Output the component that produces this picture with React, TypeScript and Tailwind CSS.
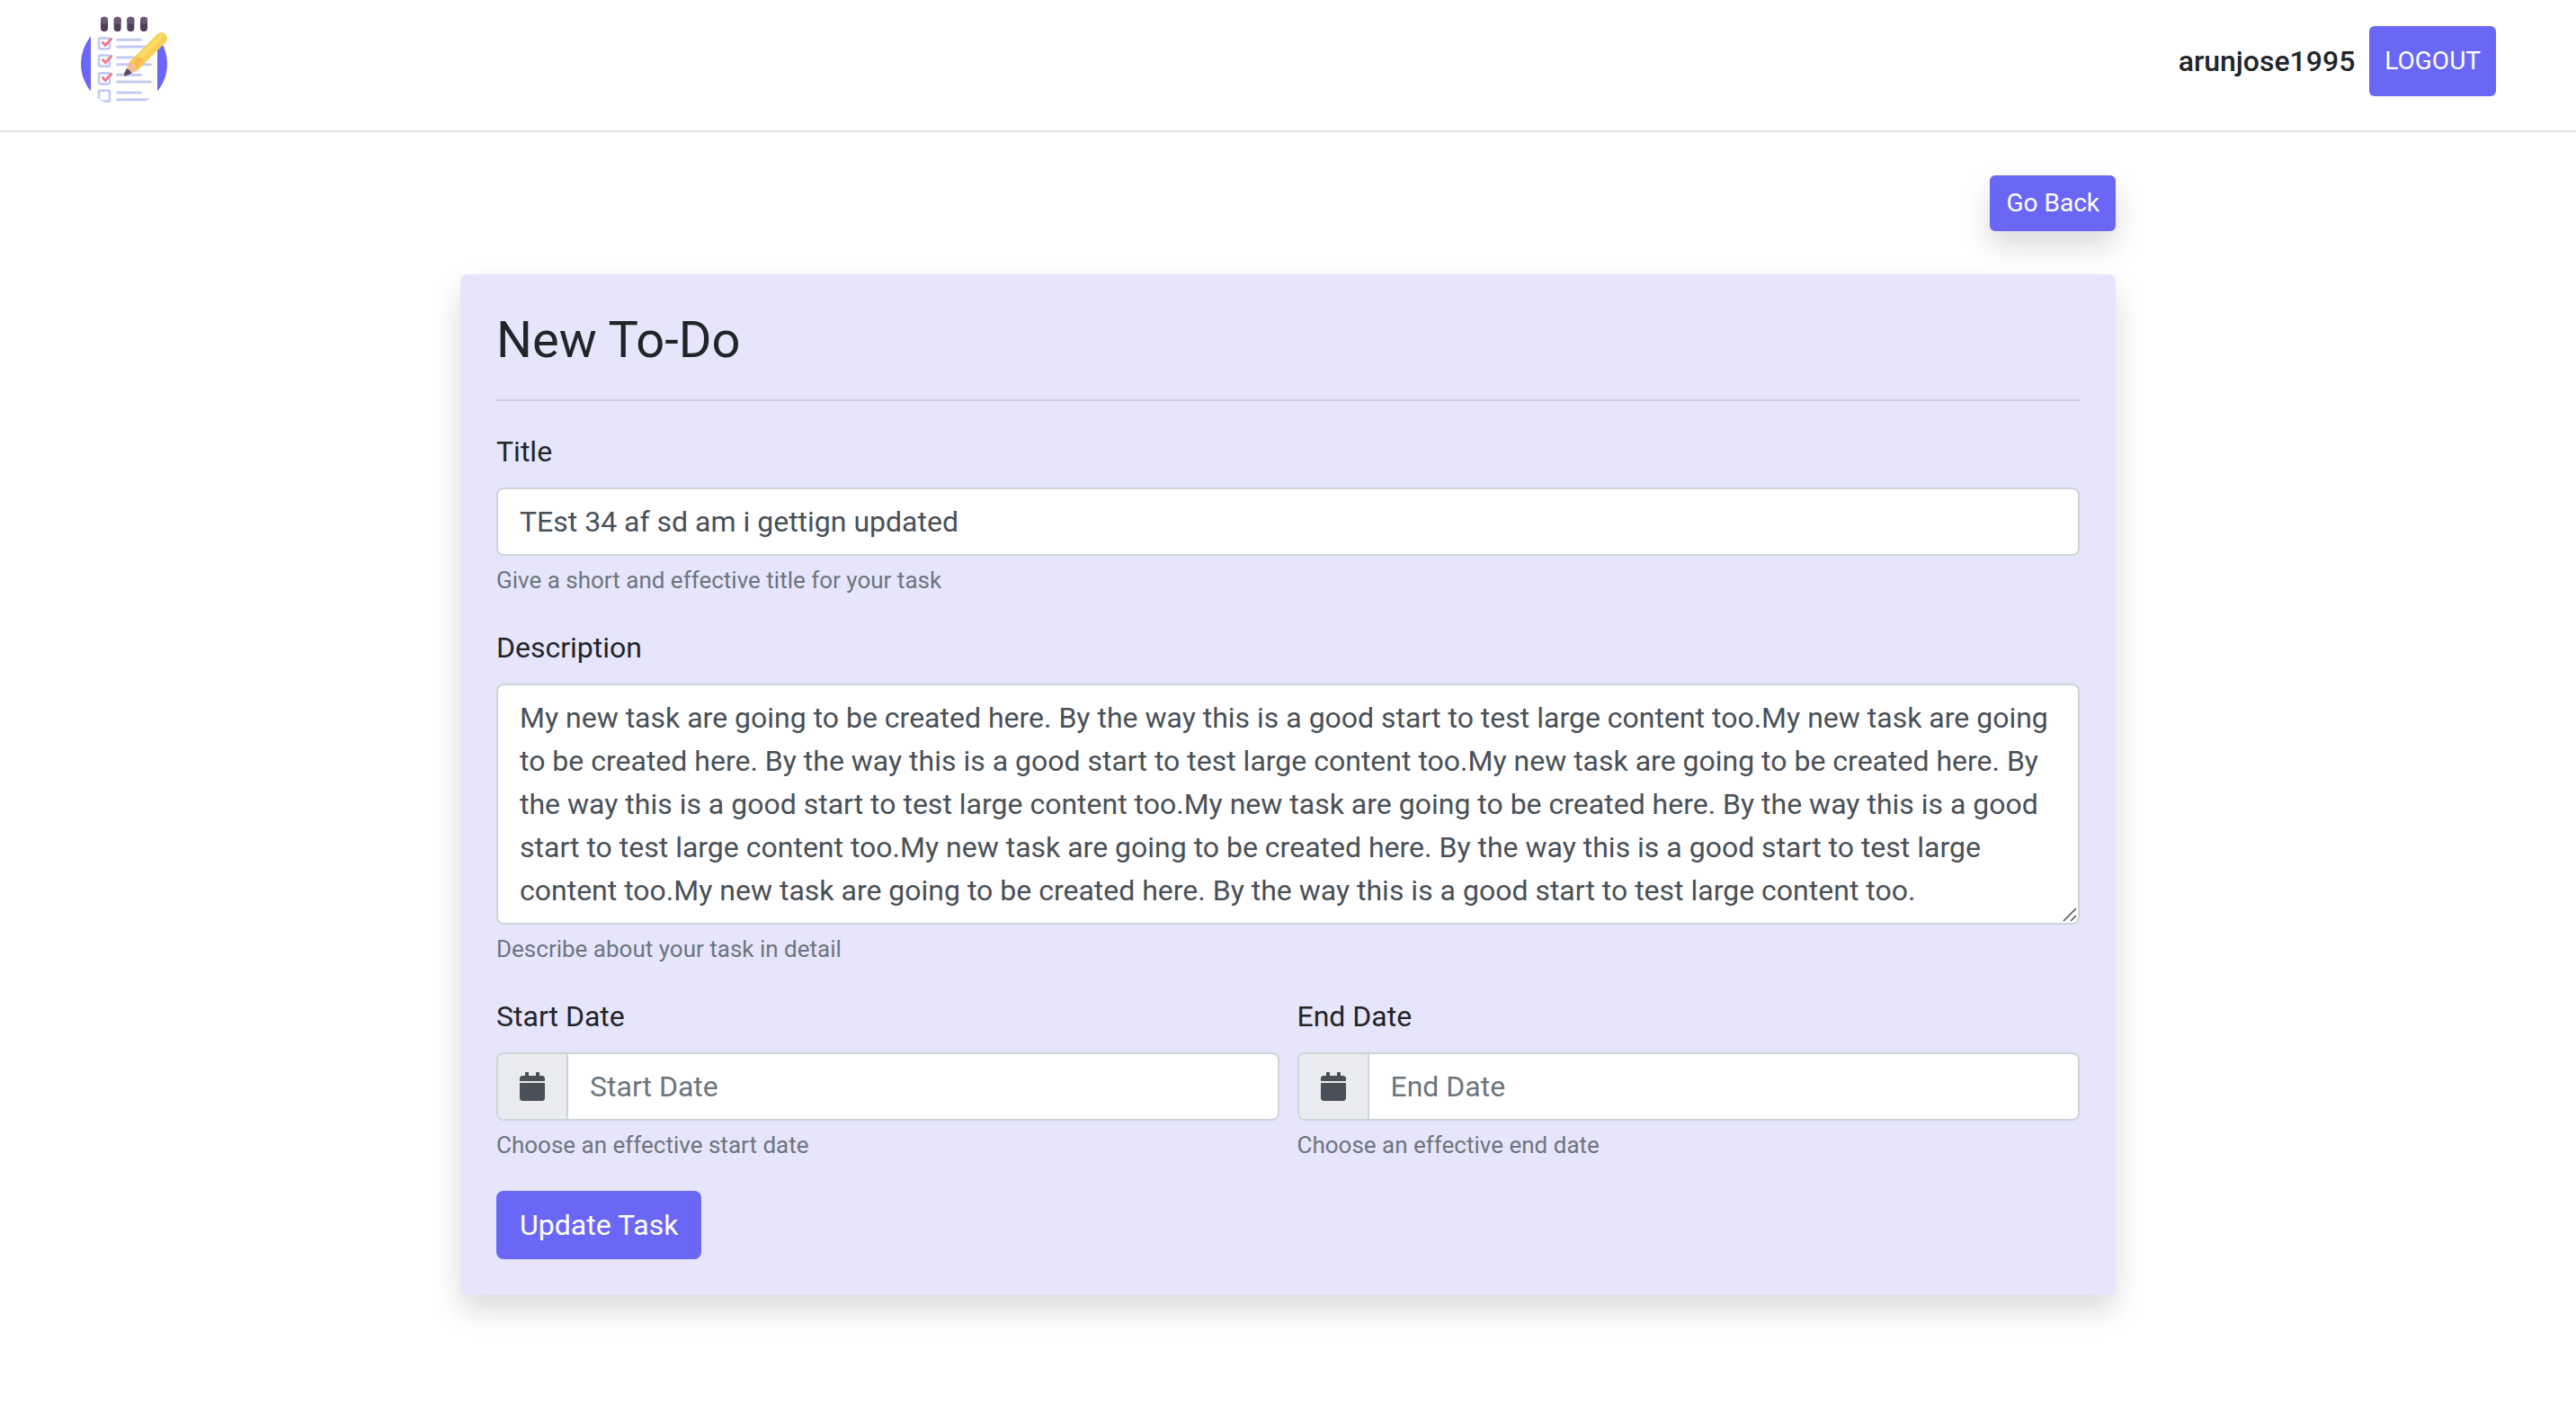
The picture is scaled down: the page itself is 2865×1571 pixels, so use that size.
import React from "react";
import { FaCalendar } from "react-icons/fa";

const SENTENCE =
  "My new task are going to be created here. By the way this is a good start to test large content too.";
const DESCRIPTION = SENTENCE.repeat(6);

const CHECK_ROWS = [125, 183, 242];
const LINE_ROWS = [133, 192, 250, 309];

function Logo() {
  return (
    <svg viewBox="57 36 294 336" className="h-28 w-[98px]" role="img" aria-label="To-Do">
      <defs>
        <clipPath id="disc">
          <circle cx="204" cy="213" r="144" />
        </clipPath>
      </defs>
      <g clipPath="url(#disc)">
        <rect x="57" y="66" width="36" height="294" fill="#6a67f7" />
        <rect x="315" y="66" width="36" height="294" fill="#6a67f7" />
        <g fill="none" stroke="#c3cbf5" strokeWidth="8">
          {[...CHECK_ROWS, 300].map((y) => (
            <rect key={y} x="120" y={y + 2} width="36" height="36" rx="6" />
          ))}
        </g>
        <g stroke="#c3cbf5" strokeWidth="9" strokeLinecap="round">
          {LINE_ROWS.map((y) => (
            <g key={y}>
              <path d={`M182 ${y}H259`} />
              <path d={`M182 ${y + 23}H292`} />
            </g>
          ))}
        </g>
      </g>
      <g fill="none" stroke="#f07f8f" strokeWidth="9" strokeLinecap="round" strokeLinejoin="round">
        {CHECK_ROWS.map((y) => (
          <path key={y} d={`M133 ${y + 17}L142 ${y + 26}L161 ${y + 5}`} />
        ))}
      </g>
      {[126, 170, 214, 258].map((x) => (
        <g key={x}>
          <rect x={x} y="56" width="24" height="49" rx="11" fill="#523f5c" />
          <rect x={x} y="56" width="24" height="24" rx="11" fill="#6b5876" />
        </g>
      ))}
      <path d="M222 207L314 115Q327 102 341 113Q354 126 342 142L249 234Z" fill="#f9cf55" />
      <path d="M240 207L331 118" stroke="#fbdc68" strokeWidth="13" />
      <path d="M222 207L245 184L272 211L249 234Z" fill="#f9c653" />
      <path d="M236 211L257 190L267 200L246 221Z" fill="#f8b84e" />
      <path d="M222 207L212 231L228 246L249 234L240 225L238 216L229 214Z" fill="#f3bd91" />
      <path d="M212 229L204 246Q202 256 211 253L229 245Q224 232 212 229Z" fill="#5d4968" />
    </svg>
  );
}

const control =
  "block w-full rounded-lg border-2 border-[#ced4da] bg-white px-6 py-3 text-[32px] leading-[48px] text-[#495057] outline-none";

function Label({ htmlFor, children }: { htmlFor: string; children: React.ReactNode }) {
  return (
    <label htmlFor={htmlFor} className="mb-4 block">
      {children}
    </label>
  );
}

function Hint({ id, children }: { id: string; children: React.ReactNode }) {
  return (
    <small id={id} className="mt-2 block text-[26px] leading-[38px] text-[#6c757d]">
      {children}
    </small>
  );
}

function DateField({ id, label, hint }: { id: string; label: string; hint: string }) {
  return (
    <div className="min-w-0 flex-1">
      <Label htmlFor={id}>{label}</Label>
      <div className="flex h-[76px] overflow-hidden rounded-lg border-2 border-[#ced4da] bg-white">
        <span className="flex w-[78px] shrink-0 items-center justify-center border-r-2 border-[#ced4da] bg-[#e9ebef] text-[#495057]">
          <FaCalendar className="h-8 w-7" aria-hidden="true" />
        </span>
        <input
          id={id}
          type="text"
          placeholder={label}
          aria-describedby={`${id}-hint`}
          className="min-w-0 flex-1 px-6 text-[32px] text-[#495057] outline-none placeholder:text-[#6c757d]"
        />
      </div>
      <Hint id={`${id}-hint`}>{hint}</Hint>
    </div>
  );
}

export default function App() {
  return (
    <div className="min-h-screen bg-white font-['Roboto',sans-serif] text-[32px] leading-[48px] text-[#212529]">
      <header className="flex items-center justify-between border-b-2 border-[#dee2e6] px-[89px] pt-3 pb-[21px]">
        <a href="#home">
          <Logo />
        </a>
        <div className="flex items-center gap-4">
          <span className="font-medium">arunjose1995</span>
          <button type="button" className="h-[78px] rounded-md bg-[#6a67f7] px-[17px] text-[28px] text-white">
            LOGOUT
          </button>
        </div>
      </header>

      <main className="mx-auto max-w-[1841px] pt-12">
        <div className="flex justify-end">
          <button
            type="button"
            className="h-[62px] rounded-md bg-[#6a67f7] px-[18px] text-[28px] leading-[42px] text-white shadow-[0_16px_32px_rgba(0,0,0,0.15)]"
          >
            Go Back
          </button>
        </div>

        <form className="mt-12 rounded-lg bg-[#e7e5fb] p-10 shadow-[0_16px_32px_rgba(0,0,0,0.15)]">
          <h1 className="text-[56px] leading-[67px]">New To-Do</h1>
          <hr className="mt-8 mb-8 border-t-2 border-black/10" />

          <div className="mb-8">
            <Label htmlFor="title">Title</Label>
            <input
              id="title"
              type="text"
              defaultValue="TEst 34 af sd am i gettign updated"
              aria-describedby="title-hint"
              className={control}
            />
            <Hint id="title-hint">Give a short and effective title for your task</Hint>
          </div>

          <div className="mb-8">
            <Label htmlFor="description">Description</Label>
            <div className="relative">
              <textarea
                id="description"
                rows={5}
                defaultValue={DESCRIPTION}
                aria-describedby="description-hint"
                className={`${control} resize-none overflow-hidden`}
              />
              <svg
                viewBox="0 0 16 16"
                className="pointer-events-none absolute right-[3px] bottom-[3px] size-4"
                fill="none"
                stroke="#555"
                strokeWidth="1.6"
                aria-hidden="true"
              >
                <path d="M1 15L15 1M9 15L15 9" />
              </svg>
            </div>
            <Hint id="description-hint">Describe about your task in detail</Hint>
          </div>

          <div className="mb-8 flex gap-5">
            <DateField id="start-date" label="Start Date" hint="Choose an effective start date" />
            <DateField id="end-date" label="End Date" hint="Choose an effective end date" />
          </div>

          <button type="button" className="block rounded-lg bg-[#6a67f7] px-[26px] py-[14px] text-white">
            Update Task
          </button>
        </form>
      </main>
    </div>
  );
}
